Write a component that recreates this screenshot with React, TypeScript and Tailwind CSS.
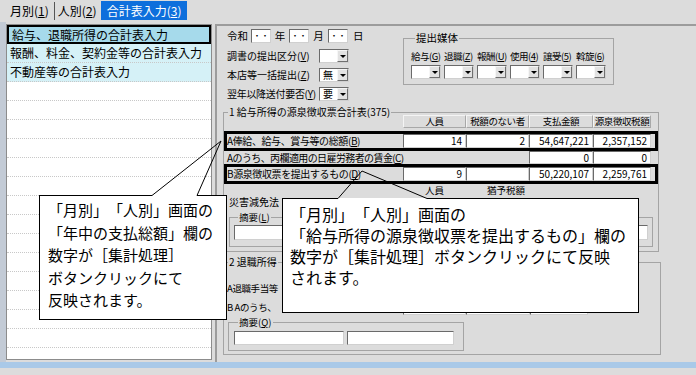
import React from 'react';

const jp = "font-['Noto_Sans_CJK_JP','Noto_Sans',sans-serif]";

const Box = ({ className = '', children }: { className?: string; children?: React.ReactNode }) => (
  <div className={`border border-t-[#6a6a6a] border-l-[#6a6a6a] border-b-[#d0d0d0] border-r-[#d0d0d0] bg-white ${className}`}>
    {children}
  </div>
);

const Combo = ({ value = '', className = 'w-[30px]' }: { value?: string; className?: string }) => (
  <Box className={`flex h-[14px] items-center ${className}`}>
    <span className="flex-1 pl-[3px] text-[10px] leading-none">{value}</span>
    <span className="flex h-full w-[11px] items-center justify-center border border-[#f6f6f6] border-r-[#707070] border-b-[#707070] bg-[#e2e2e2]">
      <span className="border-x-[3px] border-t-[3px] border-x-transparent border-t-black" />
    </span>
  </Box>
);

const cellW = ['w-[63px]', 'w-[63px]', 'w-[64px]', 'w-[58px]'];

const Head = ({ label, w }: { label: string; w: string }) => (
  <div className={`flex h-full items-center justify-center whitespace-nowrap border border-[#f4f4f4] border-r-[#a8a8a8] border-b-[#a8a8a8] text-[9.5px] tracking-[-0.4px] ${w}`}>
    {label}
  </div>
);

const Num = ({ v, w }: { v: string | null; w: string }) =>
  v === null ? (
    <div className={w} />
  ) : (
    <Box className={`flex h-full items-center justify-end pr-[3px] text-[10px] leading-none ${w}`}>{v}</Box>
  );

const Key = ({ k }: { k: string }) => (
  <>
    (<span className="underline">{k}</span>)
  </>
);

const media = [
  ['給与', 'G'],
  ['退職', 'Z'],
  ['報酬', 'U'],
  ['使用', '4'],
  ['譲受', '5'],
  ['斡旋', '6'],
];

const listItems = ['給与、退職所得の合計表入力', '報酬、料金、契約金等の合計表入力', '不動産等の合計表入力'];

export default function App() {
  return (
    <div className={`relative h-[375px] w-[696px] overflow-hidden bg-[#dcdcdc] text-[10px] leading-none text-black ${jp}`}>
      {/* tabs */}
      <div className="flex h-[22px] items-start pt-[1px] text-[12px]">
        <span className="ml-[10px] flex h-[19px] items-center">
          月別<Key k="1" />
        </span>
        <span className="ml-[5px] mt-[1px] h-[18px] w-px bg-[#555]" />
        <span className="ml-[3px] flex h-[19px] items-center">
          人別<Key k="2" />
        </span>
        <span className="ml-[4px] flex h-[19px] items-center bg-[#0e6fdc] px-[6px] text-white">
          合計表入力<Key k="3" />
        </span>
      </div>

      <div className="flex h-[340px]">
        <div className="w-[6px] bg-[#c3cbd6]" />

        {/* left list */}
        <div className="mb-[2px] mt-[2px] w-[206px] overflow-hidden border border-[#8c8c8c] bg-white text-[12px]">
          {Array.from({ length: 18 }).map((_, i) => (
            <div
              key={i}
              className={`flex h-[19px] items-center whitespace-nowrap px-[3px] ${
                i === 0
                  ? 'border-2 border-black bg-[#a6daeb]'
                  : i < 3
                  ? 'border-b border-dotted border-[#c8c8c8] bg-[#d5f1f7]'
                  : 'border-b border-dotted border-[#c8c8c8]'
              }`}
            >
              {listItems[i] ?? ''}
            </div>
          ))}
        </div>

        <div className="w-[3px]" />

        {/* right panel */}
        <div className="mt-[2px] flex-1 border-l-2 border-t-2 border-[#9c9c9c] pl-[6px] pt-[3px]">
          {/* top fields */}
          <div className="flex pl-[4px]">
            <div className="w-[176px] whitespace-nowrap">
              <div className="flex h-[14px] items-center">
                <span className="w-[24px] text-[10.5px]">令和</span>
                <Box className="flex h-[14px] w-[20px] items-center justify-center text-[8px]">・・</Box>
                <span className="w-[18px] text-center text-[10.5px]">年</span>
                <Box className="flex h-[14px] w-[20px] items-center justify-center text-[8px]">・・</Box>
                <span className="w-[19px] text-center text-[10.5px]">月</span>
                <Box className="flex h-[14px] w-[20px] items-center justify-center text-[8px]">・・</Box>
                <span className="ml-[5px] text-[10.5px]">日</span>
              </div>
              <div className="mt-[6px] flex h-[14px] items-center">
                <span className="w-[92px]">
                  調書の提出区分<Key k="V" />
                </span>
                <Combo />
              </div>
              <div className="mt-[5px] flex h-[14px] items-center">
                <span className="w-[92px]">
                  本店等一括提出<Key k="Z" />
                </span>
                <Combo value="無" />
              </div>
              <div className="mt-[5px] flex h-[14px] items-center">
                <span className="w-[92px] tracking-[-0.3px]">
                  翌年以降送付要否<Key k="Y" />
                </span>
                <Combo value="要" />
              </div>
            </div>

            <fieldset className="mt-[3px] h-[53px] w-[211px] border border-[#a4a4a4] pl-[7px]">
              <legend className="ml-[4px] px-[1px] text-[10.5px] leading-[12px]">提出媒体</legend>
              <div className="mt-[8px] flex">
                {media.map(([l, k]) => (
                  <div key={k} className="w-[33px]">
                    <div className="h-[11px] whitespace-nowrap text-[9.5px] tracking-[-0.5px]">
                      {l}
                      <Key k={k} />
                    </div>
                    <Combo className="mt-[2px] w-[30px]" />
                  </div>
                ))}
              </div>
            </fieldset>
          </div>

          {/* section 1 */}
          <fieldset className="mt-[5px] w-[436px] border border-[#a4a4a4] pb-[4px]">
            <legend className="ml-[4px] whitespace-nowrap px-[1px] text-[10px] leading-[12px]">1 給与所得の源泉徴収票合計表(375)</legend>
            <div className="-mt-[3px] flex h-[13px] border-x-[3px] border-transparent">
              <div className="w-[176px]" />
              <Head label="人員" w={cellW[0]} />
              <Head label="税額のない者" w={cellW[1]} />
              <Head label="支払金額" w={cellW[2]} />
              <Head label="源泉徴収税額" w={cellW[3]} />
            </div>
            <div className="mt-[3px] flex h-[20px] border-[3px] border-black">
              <div className="flex w-[176px] items-center whitespace-nowrap tracking-[-0.4px]">
                A俸給、給与、賞与等の総額<Key k="B" />
              </div>
              {['14', '2', '54,647,221', '2,357,152'].map((v, i) => (
                <Num key={i} v={v} w={cellW[i]} />
              ))}
            </div>
            <div className="flex h-[13px] border-x-[3px] border-transparent">
              <div className="flex w-[176px] items-center whitespace-nowrap tracking-[-0.6px]">
                Aのうち、丙欄適用の日雇労務者の賃金<Key k="C" />
              </div>
              {[null, null, '0', '0'].map((v, i) => (
                <Num key={i} v={v} w={cellW[i]} />
              ))}
            </div>
            <div className="flex h-[20px] border-[3px] border-black">
              <div className="flex w-[176px] items-center whitespace-nowrap tracking-[-0.4px]">
                B源泉徴収票を提出するもの<Key k="D" />
              </div>
              {['9', '', '50,220,107', '2,259,761'].map((v, i) => (
                <Num key={i} v={v} w={cellW[i]} />
              ))}
            </div>
            <div className="mt-[1px] flex h-[11px] border-x-[3px] border-transparent text-[9.5px]">
              <div className="w-[176px]" />
              <div className="flex w-[63px] items-center justify-center">人員</div>
              <div className="flex w-[80px] items-center justify-center">猶予税額</div>
            </div>
            <div className="ml-[5px] flex h-[12px] items-center whitespace-nowrap">災害減免法</div>
            <fieldset className="ml-[5px] mt-[3px] w-[424px] border border-[#a4a4a4] pb-[6px] pl-[4px]">
              <legend className="ml-[4px] px-[1px] text-[9.5px] leading-[12px]">
                摘要<Key k="L" />
              </legend>
              <Box className="mt-[2px] h-[15px] w-[414px]" />
            </fieldset>
          </fieldset>

          {/* section 2 */}
          <fieldset className="mt-[4px] w-[438px] border border-[#a4a4a4] pb-[3px]">
            <legend className="ml-[4px] whitespace-nowrap px-[1px] text-[10px] leading-[12px]">2 退職所得</legend>
            <div className="h-[11px]" />
            <div className="mt-[3px] flex h-[14px] border-x-[3px] border-transparent">
              <div className="flex w-[176px] items-center whitespace-nowrap text-[9.5px] tracking-[-0.4px]">A退職手当等</div>
              <Num v="" w={cellW[0]} />
              <Num v="" w={cellW[2]} />
              <Num v="" w={cellW[3]} />
            </div>
            <div className="mt-[5px] flex h-[14px] border-x-[3px] border-transparent">
              <div className="flex w-[176px] items-center whitespace-nowrap text-[9.5px] tracking-[-0.4px]">B Aのうち、</div>
              <Num v="" w={cellW[0]} />
              <Num v="" w={cellW[2]} />
              <Num v="" w={cellW[3]} />
            </div>
            <fieldset className="ml-[4px] mt-[1px] flex w-[236px] gap-[3px] border border-[#a4a4a4] pb-[5px] pl-[5px]">
              <legend className="ml-[4px] px-[1px] text-[9.5px] leading-[12px]">
                摘要<Key k="Q" />
              </legend>
              <Box className="mt-[3px] h-[14px] w-[110px]" />
              <Box className="mt-[3px] h-[14px] w-[107px]" />
            </fieldset>
          </fieldset>
        </div>
      </div>

      <div className="h-[6px] bg-[#a9c9e8]" />

      {/* callouts */}
      <div className="absolute left-[39px] top-[195px] h-[125px] w-[188px] whitespace-nowrap border-x border-b border-black bg-white pl-[8px] pt-[4px] text-[15px] leading-[22.5px] [text-spacing-trim:space-all]">
        「月別」「人別」画面の
        <br />
        「年中の支払総額」欄の
        <br />
        数字が［集計処理］
        <br />
        ボタンクリックにて
        <br />
        反映されます。
      </div>
      <div className="absolute left-[282px] top-[198px] h-[115px] w-[357px] whitespace-nowrap border-x border-b border-black bg-white pl-[7px] pt-[6px] text-[16px] leading-[21px] [text-spacing-trim:space-all]">
        「月別」「人別」画面の
        <br />
        「給与所得の源泉徴収票を提出するもの」欄の
        <br />
        数字が［集計処理］ボタンクリックにて反映
        <br />
        されます。
      </div>
      <svg className="pointer-events-none absolute left-0 top-0" width="696" height="375">
        <g fill="none" stroke="#000" strokeWidth="1">
          <line x1="39" y1="195.5" x2="152" y2="195.5" />
          <line x1="197" y1="195.5" x2="227" y2="195.5" />
          <polyline points="152,195.5 221,141 197,195.5" />
          <line x1="282" y1="198.5" x2="338" y2="198.5" />
          <line x1="427" y1="198.5" x2="639" y2="198.5" />
          <polyline points="338,198.5 362,171 427,198.5" />
        </g>
      </svg>
    </div>
  );
}
